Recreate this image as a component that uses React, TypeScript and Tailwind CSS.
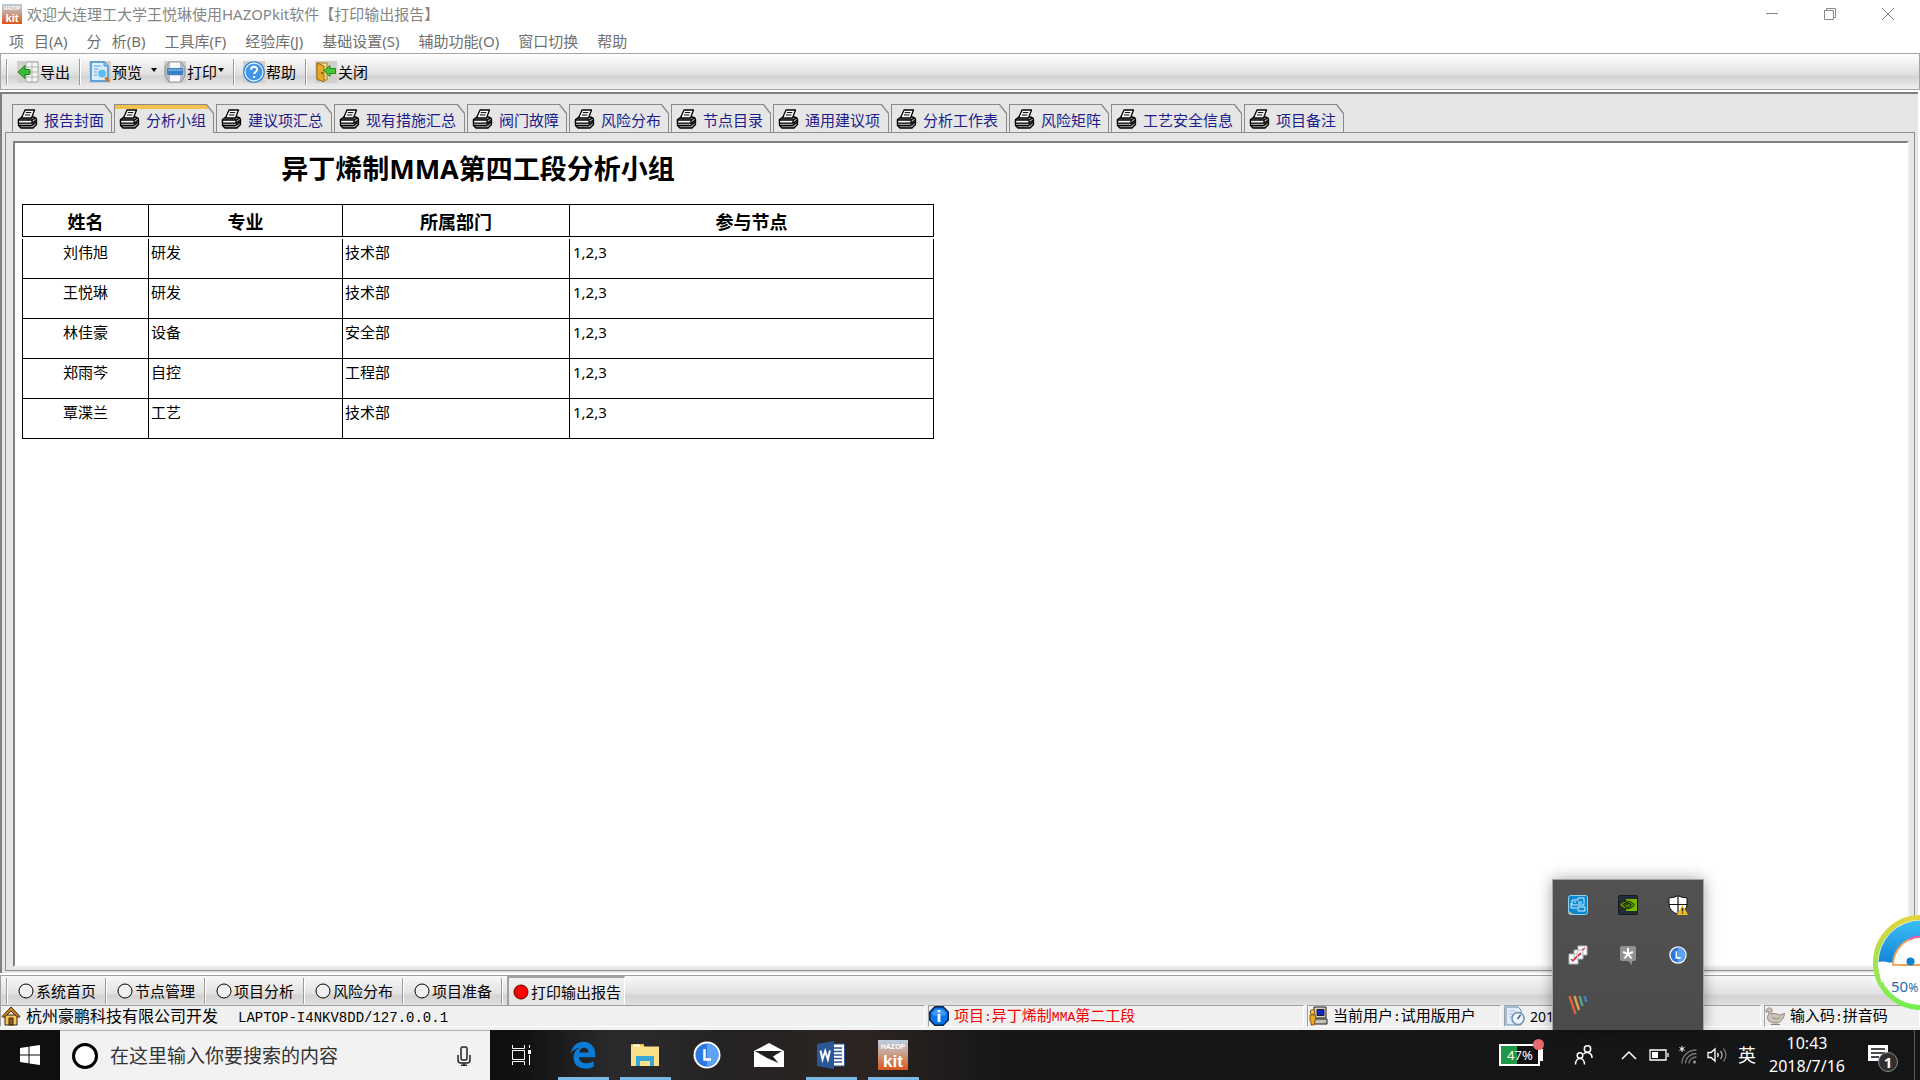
import { ReactNode, useState } from "react";

const menus = ["工具库(F)", "经验库(J)", "基础设置(S)", "辅助功能(O)", "窗口切换", "帮助"];

const tabs = [
  { title: "报告封面", width: "w-[100px]" },
  { title: "分析小组", width: "w-[100px]" },
  { title: "建议项汇总", width: "w-[116px]" },
  { title: "现有措施汇总", width: "w-[131px]" },
  { title: "阀门故障", width: "w-[100px]" },
  { title: "风险分布", width: "w-[100px]" },
  { title: "节点目录", width: "w-[100px]" },
  { title: "通用建议项", width: "w-[116px]" },
  { title: "分析工作表", width: "w-[116px]" },
  { title: "风险矩阵", width: "w-[100px]" },
  { title: "工艺安全信息", width: "w-[131px]" },
  { title: "项目备注", width: "w-[100px]" },
];

const members = [
  { name: "刘伟旭", major: "研发", dept: "技术部", nodes: "1,2,3" },
  { name: "王悦琳", major: "研发", dept: "技术部", nodes: "1,2,3" },
  { name: "林佳豪", major: "设备", dept: "安全部", nodes: "1,2,3" },
  { name: "郑雨芩", major: "自控", dept: "工程部", nodes: "1,2,3" },
  { name: "覃渫兰", major: "工艺", dept: "技术部", nodes: "1,2,3" },
];

const pages = ["系统首页", "节点管理", "项目分析", "风险分布", "项目准备"];

/* ---------- Icons ---------- */

function KitIcon({ className }: { className: string }) {
  return (
    <svg viewBox="0 0 30 30" className={className}>
      <defs>
        <linearGradient id="kit" x1="0" y1="0" x2="0" y2="1">
          <stop offset="0" stopColor="#b9cde0" />
          <stop offset="0.45" stopColor="#c9a08c" />
          <stop offset="1" stopColor="#d9561c" />
        </linearGradient>
      </defs>
      <rect width="30" height="30" fill="url(#kit)" />
      <text x="15" y="9" textAnchor="middle" fontSize="7" fontWeight="700" fill="#fff" fontFamily="Liberation Sans, sans-serif">HAZOP</text>
      <text x="15" y="27" textAnchor="middle" fontSize="17" fontWeight="700" fill="#fff" fontFamily="Liberation Sans, sans-serif">kit</text>
    </svg>
  );
}

function PrinterIcon() {
  return (
    <svg viewBox="0 0 21 20" className="h-5 w-[21px] shrink-0" stroke="#000" strokeWidth="1.3" strokeLinejoin="round">
      <path d="M1.500 10.500 5 8h12l2.500 2v5.500L16 19H4l-2.500-2.500z" fill="#a5a5a5" />
      <path d="M8 1h9.500l-3 8H4.500z" fill="#fff" />
      <path d="M8.800 3.600h5.500M7.900 6h5.500" strokeWidth="1" />
      <path d="M1.500 11h13.500v3.200H1.500z" fill="#fff" />
      <path d="M15 11 19.300 8.500M15 14.200l4.300-3M2 16.600h12.500l4.500-3.300" fill="none" />
    </svg>
  );
}

function ExportIcon() {
  return (
    <svg viewBox="0 0 22 22" className="h-[22px] w-[22px] bg-[#d2d0ca]">
      <rect x="9" y="1" width="12" height="20" rx="2" fill="#f4f4f2" stroke="#a9aaa8" />
      <path d="M9 6h12M9 11h12M9 16h12M15 1v20" stroke="#b5b7b5" />
      <path d="M1 11 8 4.500v4h5v5H8v4z" fill="#3dbb35" stroke="#1d8420" />
    </svg>
  );
}

function PreviewIcon() {
  return (
    <svg viewBox="0 0 22 22" className="h-[22px] w-[22px] bg-[#d2d0ca]">
      <path d="M2 1h13l4 4v15H2z" fill="#dceefc" stroke="#3f8fd6" strokeWidth="1.500" />
      <path d="M15 1v4h4" fill="#9cc9f0" stroke="#3f8fd6" />
      <path d="M5 5h7M5 8h4M5 11h3M5 14h3" stroke="#5aa2e0" />
      <path d="m16 16 4 4.500" stroke="#d9702a" strokeWidth="3" />
      <circle cx="13" cy="12.500" r="4.500" fill="#58bdf5" stroke="#cfe3f0" strokeWidth="1.500" />
    </svg>
  );
}

function PrintIcon() {
  return (
    <svg viewBox="0 0 22 22" className="h-[22px] w-[22px] bg-[#d2d0ca]">
      <path d="M5 1h12l4 5v9l-4 6H5l-4-6V6z" fill="#b4bbc3" stroke="#8b939c" />
      <path d="M6 1.500h10V7H6z" fill="#f7f7f7" />
      <rect x="3" y="7" width="16" height="7" rx="1" fill="#3d7fc4" />
      <path d="M4 9h14" stroke="#7bb2e6" strokeWidth="1.500" />
      <path d="M6 14.500h10v6H6z" fill="#fafafa" />
    </svg>
  );
}

function HelpIcon() {
  return (
    <svg viewBox="0 0 22 22" className="h-[22px] w-[22px] bg-[#d2d0ca]">
      <circle cx="11" cy="11" r="10.800" fill="#2b7cd3" />
      <circle cx="11" cy="11" r="9" fill="#3f97e8" stroke="#e5f1fc" strokeWidth="1.300" />
      <path d="M8 8.800c0-4 6.200-4 6.200-.3 0 2.300-3 2.300-3 4.600M11.200 15v2" fill="none" stroke="#fff" strokeWidth="2" />
    </svg>
  );
}

function CloseDoorIcon() {
  return (
    <svg viewBox="0 0 22 22" className="h-[22px] w-[22px] bg-[#d2d0ca]">
      <path d="M2 2h10v17H2z" fill="#f4dc92" stroke="#a67c20" />
      <path d="m2 2 7 3v16l-7-3z" fill="#e5a92c" stroke="#9b6d14" />
      <circle cx="7" cy="12" r="1" fill="#684808" />
      <path d="m9 9.500 6-5v3h5.500v5H15v3z" fill="#49c534" stroke="#1f8a20" />
    </svg>
  );
}

function CircleLIcon({ className }: { className: string }) {
  return (
    <svg viewBox="0 0 28 28" className={className}>
      <circle cx="14" cy="14" r="13.500" fill="#fff" />
      <circle cx="14" cy="14" r="11.500" fill="#2d78e0" />
      <path d="M14 2.500a11.500 11.500 0 0 1 0 23z" fill="#5ea3f5" />
      <path d="M11.500 8v10.500H18" fill="none" stroke="#fff" strokeWidth="2.500" />
    </svg>
  );
}

function EdgeIcon() {
  return (
    <svg viewBox="0 0 26 28" className="h-7 w-[26px]">
      <path d="M.8 12.500C2 5 7.500.7 13.500.7c7 0 11.800 5 11.800 12.300v3.200H9c.2 4 3.500 6 7.500 6 2.800 0 5-.7 7.200-2v5.500c-2.500 1.300-5.200 1.900-8.400 1.900-7 0-11.800-4.200-11.800-10.800 0-4.600 2.600-8.300 6.500-10.200C5.800 7.400 2.700 9.600.8 12.500zM9.200 11.500h9.300c0-3-1.700-4.800-4.500-4.800-2.500 0-4.300 1.700-4.800 4.800z" fill="#0b7bd8" />
    </svg>
  );
}

function FolderIcon() {
  return (
    <svg viewBox="0 0 28 24" className="h-6 w-7">
      <path d="M0 1h13v3H0z" fill="#f0b92e" />
      <path d="M0 2.500h12l1.500 1H28V23H0z" fill="#fbe08a" />
      <path d="M2 1.500h7v2H2z" fill="#fff" />
      <path d="M5 13h18v10h-4v-5H9v5H5z" fill="#39a7d6" />
    </svg>
  );
}

function MailIcon() {
  return (
    <svg viewBox="0 0 30 24" className="h-6 w-[30px]">
      <path d="M0 8 15 0l15 8v16H0z" fill="#fff" />
      <path d="M1 8h27l-9 5.500 5.500 6.500L13 15z" fill="#1f1e1f" />
    </svg>
  );
}

function WordIcon() {
  return (
    <svg viewBox="0 0 28 28" className="h-7 w-7">
      <path d="M15 3h12.500v22H15z" fill="#fff" stroke="#2b5797" />
      <path d="M17 7h8M17 10.500h8M17 14h8M17 17.500h8M17 21h8" stroke="#2b5797" strokeWidth="1.500" />
      <path d="M0 3 17 0v28L0 25z" fill="#2b5797" />
      <path d="m3.500 9.500 2 9 2.700-8.500 2.700 8.500 2-9" fill="none" stroke="#fff" strokeWidth="1.900" />
    </svg>
  );
}

/* ---------- Small pieces ---------- */

function Separator() {
  return <span className="h-[26px] w-[2px] border-l border-[#9a9a9a] bg-white" />;
}

function ToolButton({ icon, label, arrow }: { icon: ReactNode; label: string; arrow?: string }) {
  return (
    <button className="flex items-center gap-px whitespace-nowrap">
      {icon}
      <span>{label}</span>
      {arrow && (
        <span className={arrow}>
          <svg viewBox="0 0 6 4" className="h-1 w-[6px]"><path d="M0 0h6L3 4z" /></svg>
        </span>
      )}
    </button>
  );
}

function StatusCell({ icon, children }: { icon?: ReactNode; children?: ReactNode }) {
  return (
    <div className="flex h-[22px] min-w-0 items-center gap-[5px] overflow-hidden whitespace-nowrap border border-t-[#a0a0a0] border-l-[#a0a0a0] border-r-white border-b-white">
      {icon}
      <span>{children}</span>
    </div>
  );
}

function Mono({ children }: { children: ReactNode }) {
  return <span className="font-['Liberation_Mono',monospace] text-[13px]">{children}</span>;
}

function TaskButton({ label, running, children }: { label: string; running?: boolean; children: ReactNode }) {
  return (
    <button aria-label={label} className="flex h-[50px] w-[62px] flex-col items-center">
      <span className="flex flex-1 items-center">{children}</span>
      <span className={running ? "-mt-[3px] h-[3px] w-[51px] bg-[#7ab8e8]" : ""} />
    </button>
  );
}

/* ---------- Main page ---------- */

export default function App() {
  const [activeTab, setActiveTab] = useState("分析小组");

  return (
    <div className="relative flex min-h-screen w-full flex-col overflow-hidden bg-white font-['Noto_Sans','Noto_Sans_CJK_SC',sans-serif] text-[15px] leading-5 text-black">
      {/* Title bar */}
      <header className="flex h-7 items-center justify-between pl-[2px] pr-[3px] text-[#858585]">
        <div className="flex items-center gap-[5px]">
          <KitIcon className="h-5 w-5" />
          <h1>欢迎大连理工大学王悦琳使用HAZOPkit软件【打印输出报告】</h1>
        </div>
        <div className="flex">
          <button aria-label="最小化" className="flex w-[58px] justify-center">
            <svg viewBox="0 0 12 12" className="h-3 w-3"><path d="M0 5.500h12" stroke="#888" /></svg>
          </button>
          <button aria-label="还原" className="flex w-[58px] justify-center">
            <svg viewBox="0 0 12 12" className="h-3 w-3" fill="none" stroke="#888">
              <path d="M.5 2.500h9v9h-9zM2.500 2.500v-2h9v9h-2" />
            </svg>
          </button>
          <button aria-label="关闭" className="flex w-[58px] justify-center">
            <svg viewBox="0 0 12 12" className="h-3 w-3" stroke="#888"><path d="m0 0 12 12M12 0 0 12" /></svg>
          </button>
        </div>
      </header>

      {/* Menu */}
      <nav className="flex h-[25px] items-center gap-[19px] pl-[9px] text-[#707070]">
        <button className="flex gap-[10px]"><span>项</span><span>目(A)</span></button>
        <button className="flex gap-[10px]"><span>分</span><span>析(B)</span></button>
        {menus.map((m) => (
          <button key={m}>{m}</button>
        ))}
      </nav>

      {/* Toolbar */}
      <div className="flex h-[37px] items-center border border-[#a5a5a5] bg-[linear-gradient(#ffffff,#dedede_60%,#d2d2d2_64%,#f0f0f0)] pl-[5px]">
        <Separator />
        <div className="pl-[9px] pr-[9px]"><ToolButton icon={<ExportIcon />} label="导出" /></div>
        <Separator />
        <div className="flex gap-[7px] pl-2 pr-[9px]">
          <ToolButton icon={<PreviewIcon />} label="预览" arrow="pb-1 pl-[8px]" />
          <ToolButton icon={<PrintIcon />} label="打印" arrow="pb-1" />
        </div>
        <Separator />
        <div className="pl-2 pr-[9px]"><ToolButton icon={<HelpIcon />} label="帮助" /></div>
        <Separator />
        <div className="pl-2"><ToolButton icon={<CloseDoorIcon />} label="关闭" /></div>
      </div>

      {/* Report area */}
      <main className="mr-[2px] mt-[2px] flex flex-1 flex-col border-l-2 border-t-2 border-[#808080] bg-[#e6e6e6]">
        <div role="tablist" className="relative flex gap-[2px] pl-[10px] pt-[10px]">
          {tabs.map((t) => {
            const active = t.title === activeTab;
            return (
              <button
                key={t.title}
                role="tab"
                aria-selected={active}
                onClick={() => setActiveTab(t.title)}
                className={`${t.width} ${active ? "-mb-px h-[29px]" : "h-7"} flex shrink-0 bg-[#8a8a8a] px-px pt-px [clip-path:polygon(0_0,calc(100%-7px)_0,100%_9px,100%_100%,0_100%)]`}
              >
                <span
                  className={`${active ? "border-t-4 border-[#f3c14c]" : "pt-1"} flex h-full w-full bg-[#e6e6e6] pl-1 [clip-path:polygon(0_0,calc(100%-7px)_0,100%_9px,100%_100%,0_100%)]`}
                >
                  <PrinterIcon />
                  <span className="whitespace-nowrap pl-[6px] pt-px text-[#1c1c8a]">{t.title}</span>
                </span>
              </button>
            );
          })}
        </div>

        <div className="mb-[2px] ml-[3px] mr-[3px] flex flex-1 flex-col border border-[#8e8e8e] pb-[3px] pl-[7px] pr-[5px] pt-2">
          <section className="flex-1 border-2 border-b-[#f5f5f5] border-l-[#808080] border-r-[#f5f5f5] border-t-[#808080] bg-white pl-[7px]">
            <div className="w-[912px]">
              <h2 className="pb-[17px] pt-2 text-center text-[27px] font-bold leading-9">异丁烯制MMA第四工段分析小组</h2>
              <table className="w-full table-fixed border-separate border-spacing-0 border-t border-black">
                <colgroup>
                  <col className="w-[127px]" />
                  <col className="w-[194px]" />
                  <col className="w-[227px]" />
                  <col />
                </colgroup>
                <thead>
                  <tr className="h-8 text-lg leading-6">
                    {["姓名", "专业", "所属部门", "参与节点"].map((h) => (
                      <th key={h} className="border-b border-r border-black p-0 pt-[3px] font-bold first:border-l">{h}</th>
                    ))}
                  </tr>
                </thead>
                <tbody>
                  <tr className="h-[2px]"><td colSpan={4} className="p-0" /></tr>
                  {members.map((m) => (
                    <tr key={m.name} className="h-10 align-top">
                      <td className="border-b border-l border-r border-black p-0 pt-[3px] text-center">{m.name}</td>
                      <td className="border-b border-r border-black p-0 pl-[2px] pt-[3px]">{m.major}</td>
                      <td className="border-b border-r border-black p-0 pl-[2px] pt-[3px]">{m.dept}</td>
                      <td className="border-b border-r border-black p-0 pl-[3px] pt-[3px]">{m.nodes}</td>
                    </tr>
                  ))}
                </tbody>
              </table>
            </div>
          </section>
        </div>
      </main>

      {/* Page switcher */}
      <div className="mt-[2px] flex h-[30px] items-center border-l border-t border-[#a0a0a0] bg-[linear-gradient(#f8f8f8,#e2e2e2_60%,#d3d3d3_68%,#e0e0e0)] pl-[5px]">
        <Separator />
        {pages.map((p) => (
          <div key={p} className="flex items-center">
            <button className="flex w-[97px] items-center gap-[2px] whitespace-nowrap pl-[10px]">
              <svg viewBox="0 0 16 16" className="h-4 w-4"><circle cx="8" cy="8" r="7" fill="#f0f0f0" stroke="#000" /></svg>
              {p}
            </button>
            <Separator />
          </div>
        ))}
        <button className="ml-1 flex h-[29px] w-[118px] items-center gap-[2px] whitespace-nowrap border-l-2 border-r border-t-2 border-l-[#a0a0a0] border-r-white border-t-[#a0a0a0] bg-[#ededed]/60 pl-1">
          <svg viewBox="0 0 16 16" className="h-4 w-4"><circle cx="8" cy="8" r="7" fill="#f00" stroke="#600" /></svg>
          打印输出报告
        </button>
      </div>

      {/* Status bar */}
      <footer className="grid h-[25px] grid-cols-[925fr_376fr_194fr_257fr_156fr] gap-[3px] bg-[#f0f0f0]">
        <StatusCell
          icon={
            <svg viewBox="0 0 20 20" className="h-5 w-5 shrink-0" stroke="#3a2508">
              <path d="M4 9h12v10H4z" fill="#f2c65c" />
              <path d="M1 10.500 10 1l9 9.500-2 1L10 5l-7 6.500z" fill="#d08a1c" />
              <path d="M8 12h4v7H8z" fill="#8a6020" />
            </svg>
          }
        >
          <span className="text-base">杭州豪鹏科技有限公司开发</span>
          <span className="pl-5 font-['Liberation_Mono',monospace] text-sm">LAPTOP-I4NKV8DD/127.0.0.1</span>
        </StatusCell>
        <StatusCell
          icon={
            <svg viewBox="0 0 20 20" className="h-5 w-5 shrink-0">
              <path d="M6 .8h8L19.200 6v8L14 19.200H6L.8 14V6z" fill="#0a74e8" stroke="#031f4a" strokeWidth="1.500" />
              <path d="M6.500 3.500h7l3 3v3h-13v-3z" fill="#3e9cf8" />
              <path d="M10 4v2.500M10 8v8" stroke="#fff" strokeWidth="2.800" />
            </svg>
          }
        >
          <span className="text-[#f00000]">项目<Mono>:</Mono>异丁烯制<Mono>MMA</Mono>第二工段</span>
        </StatusCell>
        <StatusCell
          icon={
            <svg viewBox="0 0 20 20" className="h-5 w-5 shrink-0" stroke="#222">
              <path d="M6 1h12v11H6z" fill="#d5d2c5" />
              <path d="M9 3.500h7v6H9z" fill="#1224c8" />
              <path d="M6 13h13v5H6z" fill="#c5c2b5" />
              <circle cx="4.500" cy="6" r="2.300" fill="#f0c060" stroke="#8a5a10" />
              <path d="M2 9h5.500v6H6.500v4H3v-4H2z" fill="#e8a820" stroke="#8a5a10" />
            </svg>
          }
        >
          当前用户<Mono>:</Mono>试用版用户
        </StatusCell>
        <StatusCell
          icon={
            <svg viewBox="0 0 20 20" className="h-5 w-5 shrink-0">
              <path d="M1 1h12l3 3v15H1z" fill="#e1edf8" stroke="#5e8dbd" />
              <path d="M4 5h7M4 8h4M4 11h3" stroke="#a7c5e2" />
              <circle cx="13" cy="12.500" r="6" fill="#eef5fb" stroke="#6f93b5" strokeWidth="1.600" />
              <path d="m12.500 13 3-4" stroke="#2c5f92" strokeWidth="1.500" />
            </svg>
          }
        >
          <span className="text-sm">201</span>
        </StatusCell>
        <StatusCell
          icon={
            <svg viewBox="0 0 20 20" className="h-5 w-5 shrink-0" stroke="#8d857c">
              <path d="M1 4.500c1-3 5-3.500 6-1 .8 2-1.500 3.300-1 5 2.500-2 6-.5 8.500.5l5-1.500c-.5 4-3 8.500-7.500 9.500-5 .5-9.500-1.500-9.500-5.500 0-2 2-4 1.700-6L1 6z" fill="#cdc5ba" />
              <path d="M7 11c2 2.500 6 2.500 8.500 0M6 18.500h9" fill="none" />
            </svg>
          }
        >
          输入码<Mono>:</Mono>拼音码
        </StatusCell>
      </footer>

      {/* Windows taskbar */}
      <div className="flex h-[50px] justify-between bg-[linear-gradient(90deg,#0f0f10,#101011_27%,#2b2b2e_32%,#252223_38%,#2c2421_45%,#171718_52%,#141516)] text-white">
        <div className="flex">
          <button aria-label="开始" className="flex w-[60px] items-center justify-center">
            <svg viewBox="0 0 20 20" className="h-5 w-5" fill="#fff"><path d="m0 3 8.500-1.200v7.700H0zM9.500 1.600 20 0v9.500H9.500zM0 10.500h8.500v7.700L0 17zM9.500 10.500H20V20l-10.500-1.600z" /></svg>
          </button>
          <label className="flex w-[430px] items-center border-t border-[#b5b5b5] bg-[#f2f2f2] pl-[11px] pr-[18px]">
            <svg viewBox="0 0 28 28" className="h-7 w-7 shrink-0"><circle cx="14" cy="14" r="11.500" fill="#fff" stroke="#000" strokeWidth="3" /></svg>
            <input
              aria-label="搜索"
              placeholder="在这里输入你要搜索的内容"
              className="min-w-0 flex-1 bg-transparent pl-[11px] text-[19px] leading-6 placeholder-[#333333] outline-none"
            />
            <svg viewBox="0 0 16 20" className="h-5 w-4" fill="none" stroke="#222" strokeWidth="1.500">
              <rect x="5" y="1" width="6" height="13" rx="1.500" />
              <path d="M2 9v5q0 3 3 3h6q3 0 3-3V9M8 17v2M5 19.200h6" />
            </svg>
          </label>
          <TaskButton label="任务视图">
            <svg viewBox="0 0 21 20" className="h-5 w-[21px]" fill="none" stroke="#fff">
              <path d="M1.500 0v3.500h12V0M1.500 20v-3.500h12V20M1.500 5.500h12v9h-12zM18.500 0v3M18.500 10v10" />
              <path d="M17 5h3v4h-3z" fill="#fff" stroke="none" />
            </svg>
          </TaskButton>
          <TaskButton label="Edge" running><EdgeIcon /></TaskButton>
          <TaskButton label="文件资源管理器" running><FolderIcon /></TaskButton>
          <TaskButton label="联想"><CircleLIcon className="h-7 w-7" /></TaskButton>
          <TaskButton label="邮件"><MailIcon /></TaskButton>
          <TaskButton label="Word" running><WordIcon /></TaskButton>
          <TaskButton label="HAZOPkit" running><KitIcon className="h-[30px] w-[30px]" /></TaskButton>
        </div>

        {/* System tray */}
        <div className="flex items-center pr-[5px]">
          <div className="relative mr-[34px] flex h-[22px] w-[41px] items-center border-2 border-white bg-[linear-gradient(90deg,#1d9a48_44%,#111_44%)] pl-[6px] text-[13px]">
            47%
            <span className="absolute -right-[5px] top-[3px] h-3 w-[3px] bg-white" />
            <span className="absolute -right-[6px] -top-[7px] h-[11px] w-[11px] rounded-full bg-[#e86a6c]" />
          </div>
          <button aria-label="人脉" className="mr-[27px]">
            <svg viewBox="0 0 20 20" className="h-5 w-5" fill="none" stroke="#fff" strokeWidth="1.500">
              <circle cx="13.500" cy="4" r="3.200" />
              <circle cx="6" cy="10.500" r="2.800" />
              <path d="M1.500 19.500c0-8 9-8 9 0M9.500 9c3-3 8.500-1.500 8.500 4" />
            </svg>
          </button>
          <button aria-label="显示隐藏的图标" className="mr-3">
            <svg viewBox="0 0 16 10" className="h-[10px] w-4" fill="none" stroke="#fff" strokeWidth="1.500"><path d="m1 9 7-7 7 7" /></svg>
          </button>
          <svg viewBox="0 0 20 12" className="mr-[10px] h-3 w-5" fill="none" stroke="#fff" strokeWidth="1.300">
            <path d="M1 1h16v10H1zM19 4v4" />
            <path d="M3 3h6v6H3z" fill="#fff" stroke="none" />
          </svg>
          <svg viewBox="0 0 18 19" className="mr-[10px] h-[19px] w-[18px]" fill="none" stroke="#777" strokeWidth="1.300">
            <path d="M3 17.500C3 10 9 4 17.500 4M6.500 17.500C6.500 12 11 7.500 17.500 7.500M10 17.500c0-3.500 3-6.500 7.500-6.500" />
            <circle cx="15.500" cy="16" r="1.500" fill="#999" stroke="none" />
            <path d="M3 0v6M.5 1.500l5 3M5.500 1.500l-5 3" stroke="#fff" strokeWidth="1" />
          </svg>
          <svg viewBox="0 0 21 18" className="mr-[10px] h-[18px] w-[21px]" fill="none" stroke="#fff" strokeWidth="1.300">
            <path d="M1 6.500h3L8 3v12l-4-3.500H1z" />
            <path d="M10.500 7q1.500 2 0 4" />
            <path d="M13.500 5q3 4 0 8" stroke="#aaa" />
            <path d="M16.500 2.500q5 6.500 0 13" stroke="#777" />
          </svg>
          <span className="mr-[13px] text-lg leading-6">英</span>
          <div className="mr-[23px] flex flex-col items-center whitespace-nowrap text-base leading-[23px]">
            <span>10:43</span>
            <span>2018/7/16</span>
          </div>
          <button aria-label="通知" className="relative mr-4 h-8 w-[30px]">
            <svg viewBox="0 0 20 20" className="h-5 w-5">
              <path d="M0 0h20v16h-4v4l-5-4H0z" fill="#fff" />
              <path d="M3 4h14M3 8h14M3 12h8" stroke="#111" strokeWidth="1.500" />
            </svg>
            <span className="absolute -bottom-px right-0 flex h-5 w-5 items-center justify-center rounded-full border border-[#8a8a8a] bg-[#303030] text-[15px] font-bold">1</span>
          </button>
          <span className="h-[50px] w-px bg-[#5a5a5a]" />
        </div>
      </div>

      {/* Hidden icons flyout */}
      <div className="absolute bottom-[50px] right-[216px] grid h-[151px] w-[152px] grid-cols-3 grid-rows-3 place-items-center border border-[#a5a5a5] border-b-0 bg-[linear-gradient(#525252,#4b4b4b)] shadow-[0_0_14px_rgba(0,0,0,0.35)]">
        <svg viewBox="0 0 20 20" className="h-5 w-5" fill="none" stroke="#d6f0ff">
          <rect x=".5" y=".5" width="19" height="19" rx="2" fill="#0c87d0" stroke="#8bd0f5" />
          <path d="M4 5h6V3h6v7H4zM6 7h2M11 6v3M13 6v3M3 8v5h6M10 12h7v4h-7z" />
          <path d="M1 16l4 3H1z" fill="#f2b632" stroke="none" />
        </svg>
        <svg viewBox="0 0 20 20" className="h-5 w-5">
          <rect x=".5" y=".5" width="19" height="19" rx="1" fill="#222b36" stroke="#151a20" />
          <path d="M8 4h11v12H8z" fill="#76b900" />
          <path d="M1.500 10C4 5.500 12 4 16.500 10 12 15.500 5 14.500 1.500 10z" fill="#5b9300" stroke="#1e2a10" />
          <path d="M5 10c2-3 6-3 8 0-2 3-5 3-6.500.5L10 9" fill="none" stroke="#1e2a10" strokeWidth="1.300" />
        </svg>
        <svg viewBox="0 0 20 20" className="h-5 w-5">
          <path d="M10 .7Q14 3 19 2.800V9q0 7-9 10.500Q1 16 1 9V2.800Q6 3 10 .7z" fill="#fff" stroke="#111" />
          <path d="M10 1v18M1 9.500h18" stroke="#111" strokeWidth="1.200" />
          <path d="m14.500 9.500 5.500 10.500H9z" fill="#f5bd25" />
          <path d="M14.500 13v3.500M14.500 17.500v1.300" stroke="#222" strokeWidth="1.500" />
        </svg>
        <svg viewBox="0 0 20 20" className="h-5 w-5" stroke="#b5b5b5">
          <path d="M10 1h9v9h-9zM6 5h9v9H6zM1 9h9v10H1z" fill="#fff" />
          <path d="m3 14 2 2 4-5M10 11l3-3M14 5l3-2" fill="none" stroke="#d8283c" strokeWidth="1.500" />
        </svg>
        <svg viewBox="0 0 20 20" className="h-5 w-5">
          <path d="M4 1h12q2 0 2 2v11q0 2-2 2h-2v4l-4-4H4q-2 0-2-2V3q0-2 2-2z" fill="#929292" />
          <path d="M10 3v6l-5-2M10 9l5-2M10 9l-3.500 4.500M10 9l3.500 4.500" fill="none" stroke="#fff" strokeWidth="2" />
        </svg>
        <CircleLIcon className="h-[18px] w-[18px]" />
        <svg viewBox="0 0 20 20" className="h-5 w-5" fill="none" strokeWidth="2.500">
          <path d="m1.500 1 6 18" stroke="#d9623f" />
          <path d="m6.500 1 4.500 14" stroke="#e0a04a" />
          <path d="m11.500 1 3 10" stroke="#5fa08c" />
          <path d="m16.500 1 2 6" stroke="#4a7db5" />
        </svg>
      </div>

      {/* Floating memory ball */}
      <div className="absolute -right-12 bottom-[70px] h-[95px] w-[95px]">
        <svg viewBox="0 0 95 95" className="h-full w-full">
          <defs>
            <linearGradient id="ring" x1="0" y1="0" x2="0" y2="1">
              <stop offset="0" stopColor="#e3d33c" />
              <stop offset="0.5" stopColor="#a4e250" />
              <stop offset="1" stopColor="#74f050" />
            </linearGradient>
            <linearGradient id="sky" x1="0" y1="0" x2="0" y2="1">
              <stop offset="0" stopColor="#39bff5" />
              <stop offset="1" stopColor="#1684d8" />
            </linearGradient>
          </defs>
          <circle cx="47.500" cy="47.500" r="45" fill="#fff" stroke="url(#ring)" strokeWidth="5" />
          <path d="M5.500 47.500a42 42 0 0 1 84 0z" fill="url(#sky)" />
          <path d="M15 22l7 6" stroke="#2297dc" />
          <path d="M20 50a28 28 0 0 1 56 0z" fill="#fff" stroke="#f0a35a" strokeWidth="2" />
          <path d="M36 24q11-5 22 0" fill="none" stroke="#e858b8" strokeWidth="2" />
          <path d="M5 47q10-2 15 4 14-2 22 8l-4 8H8z" fill="#fff" />
          <path d="M20 51h56v6H40z" fill="#fff" />
          <circle cx="37.500" cy="46.500" r="4" fill="#0b82d4" />
        </svg>
        <span className="absolute left-[18px] top-[61px] text-[15px] text-[#1f6ca8]">50<span className="text-xs">%</span></span>
      </div>
    </div>
  );
}
